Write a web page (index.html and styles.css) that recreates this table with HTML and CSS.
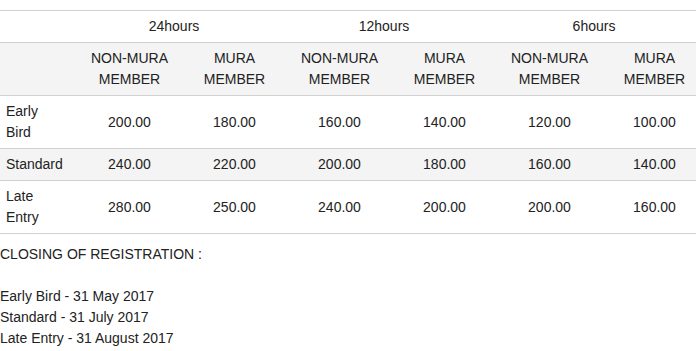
FILE: index.html
```html
<!DOCTYPE html>
<html>
<head>
<meta charset="utf-8">
<link rel="stylesheet" href="styles.css">
</head>
<body>
<div class="page">
  <table class="fees">
    <colgroup>
      <col class="c-first">
      <col class="c"><col class="c"><col class="c"><col class="c"><col class="c"><col class="c">
    </colgroup>
    <tr class="hours">
      <th></th>
      <th colspan="2">24hours</th>
      <th colspan="2">12hours</th>
      <th colspan="2">6hours</th>
    </tr>
    <tr class="shade">
      <th></th>
      <th>NON-MURA<br>MEMBER</th>
      <th>MURA<br>MEMBER</th>
      <th>NON-MURA<br>MEMBER</th>
      <th>MURA<br>MEMBER</th>
      <th>NON-MURA<br>MEMBER</th>
      <th>MURA<br>MEMBER</th>
    </tr>
    <tr>
      <td class="label">Early<br>Bird</td>
      <td>200.00</td><td>180.00</td><td>160.00</td><td>140.00</td><td>120.00</td><td>100.00</td>
    </tr>
    <tr class="shade">
      <td class="label">Standard</td>
      <td>240.00</td><td>220.00</td><td>200.00</td><td>180.00</td><td>160.00</td><td>140.00</td>
    </tr>
    <tr class="last">
      <td class="label">Late<br>Entry</td>
      <td>280.00</td><td>250.00</td><td>240.00</td><td>200.00</td><td>200.00</td><td>160.00</td>
    </tr>
  </table>
  <p class="closing">CLOSING OF REGISTRATION :<br><br>Early Bird - 31 May 2017<br>Standard - 31 July 2017<br>Late Entry - 31 August 2017</p>
</div>
</body>
</html>
```
FILE: styles.css
```css
html, body {
  margin: 0;
  padding: 0;
  overflow: hidden;
  background: #fff;
}
body {
  font-family: "Liberation Sans", Arial, sans-serif;
  font-size: 14px;
  line-height: 21px;
  color: #222;
}
.page {
  padding-top: 10px;
}
.fees {
  border-collapse: collapse;
  table-layout: fixed;
  width: 707px;
}
.c-first { width: 77px; }
.c { width: 105px; }
.fees th, .fees td {
  border-top: 1px solid #d0d0d0;
  padding: 5px 6px;
  text-align: center;
  vertical-align: middle;
  font-weight: normal;
}
.fees td.label {
  text-align: left;
}
.hours th {
  padding-right: 22px;
}
.shade th, .shade td {
  background: #f4f4f4;
}
.last td {
  border-bottom: 1px solid #d0d0d0;
}
.closing {
  margin: 10px 0 0;
}
```
